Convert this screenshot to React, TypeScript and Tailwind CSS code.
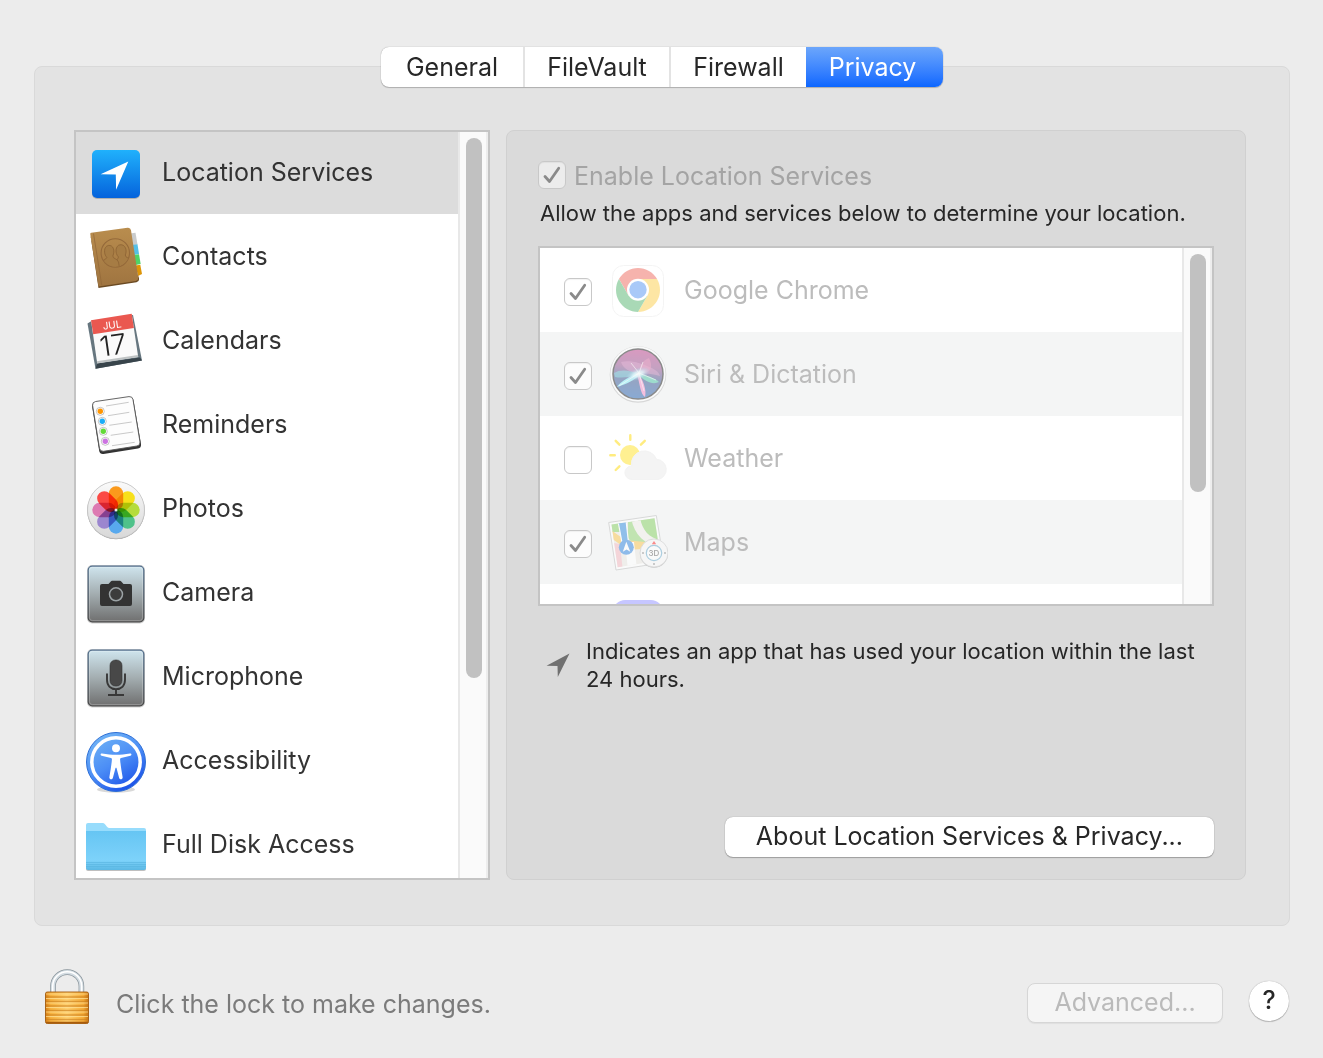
import type { ReactNode } from "react";

const PETALS = ["#fb9a1c", "#f7e01a", "#b5dc3c", "#4fc28a", "#58a9ee", "#9b86cf", "#dd7ab2", "#fb4a45"];

function SideIcon({ children }: { children: ReactNode }) {
  return (
    <svg viewBox="0 -2 64 64" className="size-16 shrink-0 overflow-visible" aria-hidden="true">
      {children}
    </svg>
  );
}

function LocationIcon() {
  return (
    <SideIcon>
      <defs>
        <linearGradient id="loc" x1="0" y1="0" x2="0" y2="1">
          <stop offset="0" stopColor="#20b1fc" />
          <stop offset="1" stopColor="#0563dc" />
        </linearGradient>
      </defs>
      <rect x="8" y="9" width="48" height="48" rx="5" fill="#000" opacity=".2" />
      <rect x="8" y="8" width="48" height="48" rx="5" fill="url(#loc)" />
      <path d="M44.3 19.4 16.6 32.3l15.2.2.3 15.2z" fill="#fff" />
    </SideIcon>
  );
}

function ContactsIcon() {
  return (
    <SideIcon>
      <defs>
        <linearGradient id="book" x1="0" y1="0" x2="0" y2="1">
          <stop offset="0" stopColor="#b98d4e" />
          <stop offset="1" stopColor="#9f7440" />
        </linearGradient>
        <clipPath id="seal">
          <circle cx="31.300" cy="27" r="13.600" />
        </clipPath>
      </defs>
      <path d="m46 7.500 5.500-.8 2 11.800-5 1z" fill="#c9cbcc" />
      <path d="m48 19 5.500-.8 1.500 9.800-5 1z" fill="#55bfe6" />
      <path d="m49.500 29 5.500-.8 1.700 9.800-5 1z" fill="#4fd367" />
      <path d="m51.500 39.500 4.800-.7 1.700 9.200-4 2z" fill="#dd9508" />
      <path d="M6.500 9.500 14.500 62l38-5.800q3-.5 2.500-4l-1-3-36 5z" fill="#6b4a22" />
      <path d="M6.300 8.200q-.2-1.200 1-1.400L43.500 1.700q3-.4 3.500 2.600l7.300 47q.4 3-2.600 3.600L14.500 60.500z" fill="url(#book)" />
      <path d="m9.500 7.500 8.300 52" stroke="#94693a" strokeWidth=".8" />
      <circle cx="31.300" cy="27" r="14.200" fill="none" stroke="#94693a" strokeWidth="1.100" />
      <g clipPath="url(#seal)" fill="#a67c44" stroke="#8f6536" strokeWidth=".9">
        <path d="M33 36c-1-2 1-3 1.500-5-4-4-3-11.500 1.500-12.200 5-.8 7.500 5 5.300 10.200 0 2.500 3 3 5 4v8H33z" />
        <path d="M16 38c1-3.500 6-4 6.800-6.500-3.500-4-3-11 1.500-12 5-1 7 5.500 4.500 10.500 0 3 4.700 2.500 5.700 6l1 6H16z" />
      </g>
    </SideIcon>
  );
}

function CalendarIcon() {
  return (
    <SideIcon>
      <path d="m3.500 13.500 4-2.500L49 5l9 45.500-46.500 8.300z" fill="#66767f" />
      <path d="m11.500 58.800 46.500-8.300-2-3-43 6z" fill="#38444b" />
      <path d="m7 10.200 40.700-6.500L54.200 47l-41 6.300z" fill="#fafafa" />
      <path d="m12.800 51.300 41-6.300.4 2-41 6.500z" fill="#bfc3c4" />
      <path d="m7 10.200 40.700-6.500 2.200 14.300L9.200 24.300z" fill="#ea5850" />
      <text x="0" y="0" transform="translate(28.500 18.500) rotate(-8)" textAnchor="middle" fontSize="10" fill="#fff" fontFamily="Inter, sans-serif">JUL</text>
      <text x="0" y="0" transform="translate(30.500 45) rotate(-8)" textAnchor="middle" fontSize="28" fontWeight="300" fill="#222" fontFamily="Inter, sans-serif">17</text>
    </SideIcon>
  );
}

function RemindersIcon() {
  return (
    <SideIcon>
      <path d="M8.200 13q-.5-4 3-4.500L45.500 3.500q3.500-.4 4 3L57 50q.4 4-3 4.500l-34.500 5.400q-3.500.5-4.300-3z" fill="#333" />
      <path d="M8.600 11.500q-.4-3.500 3-4L45 2.600q3.400-.4 4 3L56 48q.4 3.500-3 4L19.500 57.300q-3.300.4-4-3z" fill="#fdfdfd" stroke="#555" strokeWidth=".9" />
      <path d="m22 12 22.700-3.700M24 21.700l21.300-3.400m-20 13L47.700 28m-21 13.300L49.300 38M28 51.700l22.700-3.400" stroke="#bbb" strokeWidth=".8" />
      {[
        ["#ff9500", 16.3, 17.3],
        ["#1badf8", 18.3, 27.3],
        ["#63da38", 19.3, 37.3],
        ["#cc73e1", 21.3, 47.3],
      ].map(([c, x, y]) => (
        <g key={c}>
          <circle cx={x} cy={y} r="4" fill="#fff" stroke="#aaa" strokeWidth=".7" />
          <circle cx={x} cy={y} r="2.700" fill={String(c)} />
        </g>
      ))}
    </SideIcon>
  );
}

function PhotosIcon() {
  return (
    <SideIcon>
      <defs>
        <linearGradient id="photo" x1="0" y1="0" x2="0" y2="1">
          <stop offset="0" stopColor="#fafafa" />
          <stop offset="1" stopColor="#d8d8d8" />
        </linearGradient>
      </defs>
      <circle cx="32" cy="32.400" r="28.800" fill="#999" />
      <circle cx="32" cy="32" r="28.500" fill="url(#photo)" stroke="#c4c4c4" strokeWidth=".7" />
      <g style={{ isolation: "isolate" }}>
        {PETALS.map((c, i) => (
          <rect key={c} x="24.800" y="8.300" width="14.400" height="23.700" rx="7.200" fill={c} transform={`rotate(${i * 45} 32 32)`} className="mix-blend-multiply" />
        ))}
      </g>
      <circle cx="32" cy="32" r="1.500" fill="#fff" opacity=".9" />
    </SideIcon>
  );
}

function MetalTile({ id }: { id: string }) {
  return (
    <>
      <defs>
        <linearGradient id={id} x1="0" y1="0" x2="0" y2="1">
          <stop offset="0" stopColor="#cfe5ee" />
          <stop offset=".5" stopColor="#a3adb0" />
          <stop offset="1" stopColor="#6f6f6f" />
        </linearGradient>
        <linearGradient id={id + "-edge"} x1="0" y1="0" x2="0" y2="1">
          <stop offset="0" stopColor="#56728f" />
          <stop offset="1" stopColor="#4a4a4a" />
        </linearGradient>
      </defs>
      <rect x="3" y="3" width="58" height="58.500" rx="5" fill="#000" opacity=".18" />
      <rect x="4.200" y="4.200" width="55.600" height="55.600" rx="4" fill={`url(#${id})`} stroke={`url(#${id}-edge)`} strokeWidth="1.300" />
      <rect x="5.400" y="5.400" width="53.200" height="53.200" rx="3" fill="none" stroke="#fff" strokeWidth=".7" opacity=".35" />
    </>
  );
}

function CameraIcon() {
  return (
    <SideIcon>
      <MetalTile id="cam" />
      <path d="M18 22h6.500l2.500-2.700q.4-.5 1-.5h8q.600 0 1 .5l2.500 2.700H46q2 0 2 2v18q0 2-2 2H18q-2 0-2-2V24q0-2 2-2z" fill="#333" />
      <circle cx="32" cy="32.300" r="6.500" fill="#3c3c3c" stroke="#9ba2a5" strokeWidth="1.500" />
    </SideIcon>
  );
}

function MicrophoneIcon() {
  return (
    <SideIcon>
      <MetalTile id="mic" />
      <rect x="26" y="14" width="12" height="26" rx="5.500" fill="#484848" stroke="#333" strokeWidth=".6" />
      <path d="M23 27.500v6.300c0 6 3.800 9.300 9 9.300s9-3.300 9-9.300v-6.300M32 43v5.500M24 49h16" fill="none" stroke="#383838" strokeWidth="1.900" />
    </SideIcon>
  );
}

function AccessibilityIcon() {
  return (
    <SideIcon>
      <defs>
        <linearGradient id="acc" x1=".2" y1="0" x2=".8" y2="1">
          <stop offset="0" stopColor="#72b6f5" />
          <stop offset=".5" stopColor="#4b8df6" />
          <stop offset="1" stopColor="#1549e6" />
        </linearGradient>
      </defs>
      <ellipse cx="32" cy="59.500" rx="19" ry="3.200" fill="#000" opacity=".15" />
      <circle cx="32" cy="32" r="29.500" fill="url(#acc)" stroke="#2e6fd6" strokeWidth="1" />
      <circle cx="32" cy="32" r="24.200" fill="none" stroke="#fff" strokeWidth="3.500" />
      <circle cx="32" cy="18.300" r="4" fill="#fff" />
      <path d="M18 23.400c5 .8 9.500 1.400 14 1.400s9-.6 14-1.400c1.700-.2 2 2 .4 2.400l-9.400 2.100c-.8.2-1 .7-.9 1.500.3 4.600 1.500 12 2.500 17.500.5 2.600-2.800 3.200-3.500.8L32.500 38c-.2-.5-.8-.5-1 0l-2.600 9.700c-.7 2.400-4 1.800-3.500-.8 1-5.500 2.200-12.900 2.500-17.500.1-.8-.1-1.300-.9-1.500l-9.400-2.100c-1.600-.4-1.300-2.600.4-2.400z" fill="#fff" />
    </SideIcon>
  );
}

function FolderIcon() {
  return (
    <SideIcon>
      <defs>
        <linearGradient id="fold" x1="0" y1="0" x2="0" y2="1">
          <stop offset="0" stopColor="#66c5f3" />
          <stop offset=".75" stopColor="#7dd2fa" />
          <stop offset="1" stopColor="#5bb8e4" />
        </linearGradient>
      </defs>
      <path d="M2 20v35q0 2 2 2h56q2 0 2-2V20z" fill="#000" opacity=".25" />
      <path d="M2 11q0-2 2-2h14.500q1.500 0 2.500 1.200l2 2.600q1 1.200 2.500 1.200H60q2 0 2 2v20H2z" fill="#97dcfc" />
      <path d="M2 17h60v37q0 2-2 2H4q-2 0-2-2z" fill="url(#fold)" />
      <path d="M2 48.500h60M2 50.500h60M2 52.500h60" stroke="#58b4df" strokeWidth=".6" />
    </SideIcon>
  );
}

function AppIcon({ faded = "opacity-40", children }: { faded?: string; children: ReactNode }) {
  return (
    <svg viewBox="0 0 60 60" className={`ml-4 size-[60px] shrink-0 ${faded}`} aria-hidden="true">
      {children}
    </svg>
  );
}

function ChromeIcon() {
  return (
    <AppIcon>
      <rect x="4.500" y="5.500" width="51" height="51" rx="11" fill="#fff" stroke="#e4e4e4" strokeWidth="1" />
      <path d="M30 19h19.050A22 22 0 0 0 10.950 19L20.500 35.500z" fill="#ea4335" />
      <path d="M49.050 19A22 22 0 0 1 30 52l9.500-16.500L30 19z" fill="#fcc31e" />
      <path d="M30 52A22 22 0 0 1 10.950 19l9.550 16.500h19z" fill="#2ba24c" />
      <circle cx="30" cy="29.700" r="11" fill="#fff" />
      <circle cx="30" cy="29.700" r="8.700" fill="#2a7af0" />
    </AppIcon>
  );
}

function SiriIcon() {
  return (
    <AppIcon faded="opacity-50">
      <defs>
        <linearGradient id="siri" x1=".5" y1="0" x2=".4" y2="1">
          <stop offset="0" stopColor="#c0408c" />
          <stop offset=".35" stopColor="#96508f" />
          <stop offset=".6" stopColor="#3a5590" />
          <stop offset="1" stopColor="#1f62b4" />
        </linearGradient>
        <radialGradient id="glow">
          <stop offset="0" stopColor="#fff" />
          <stop offset=".4" stopColor="#c8f6ff" stopOpacity=".8" />
          <stop offset="1" stopColor="#6ad" stopOpacity="0" />
        </radialGradient>
      </defs>
      <circle cx="30" cy="30.500" r="28.300" fill="#bbb" />
      <circle cx="30" cy="30" r="27.600" fill="#fff" />
      <circle cx="30" cy="30" r="25" fill="url(#siri)" stroke="#222" strokeWidth="1.500" />
      <path d="M30 30C21 28 15 24 13 18c9-2 19 1 26 4 8 3 12 6 13 10-7-2-14-3-22-2z" fill="#e08ac4" opacity=".45" />
      <path d="M32 29c-1-7 3-13 9-15 4 8 3 16-9 15z" fill="#f072a8" opacity=".5" />
      <path d="M6 29c6-4 16-3 24 1-8 4-18 4-23 3z" fill="#51d2dc" opacity=".6" />
      <path d="M31 29C22 32 13 37 9 43c10-3 17-7 23-12z" fill="#83f0fa" />
      <path d="M30 29c8 2 17 5 21 9-6 3-14 0-21-8z" fill="#4ee0ac" opacity=".8" />
      <path d="M30 29c5 7 9 17 7 24-5-3-5-14-8-22z" fill="#f58ac8" />
      <ellipse cx="30" cy="30" rx="13" ry="6" fill="url(#glow)" transform="rotate(-20 30 30)" />
      <path d="m11 42 20-13 17 7M31 29l5 18M23 19l8 10 4-11" fill="none" stroke="#fff" strokeWidth="1" opacity=".6" />
    </AppIcon>
  );
}

function WeatherIcon() {
  return (
    <AppIcon faded="opacity-100">
      <circle cx="22" cy="27" r="10" fill="#fff091" />
      <path d="M22.300 7.300v4.500M36.800 12.800l-3.900 3.900M2.300 27.300h4.500M7.700 12.800l3.700 3.900M7.700 42l3.700-3.700" stroke="#ffec80" strokeWidth="2.400" strokeLinecap="round" />
      <path d="M24 51.500a6.800 6.800 0 0 1-.5-13.600A13 13 0 0 1 48.500 31.300a10.200 10.200 0 0 1 1.500 20.200z" fill="#f4f4f4" stroke="#f3f3f3" />
    </AppIcon>
  );
}

function MapsIcon() {
  return (
    <AppIcon faded="opacity-50">
      <defs>
        <clipPath id="sheet">
          <path d="m3.500 12.500 43-6.300 6.500 42-43.300 7z" />
        </clipPath>
      </defs>
      <path d="m.7 10.500 47.600-7 7.700 47-48 7.500z" fill="#fff" stroke="#bbb" strokeWidth="1" />
      <g clipPath="url(#sheet)">
        <path d="M0 0h60v60H0z" fill="#ece9e2" />
        <path d="M0 5h12l4 15H0zM30 6h25v30c-14 0-24-12-25-30z" fill="#83d060" />
        <path d="M0 30 12 32l3 28H0z" fill="#f4b6bf" />
        <path d="m20 10 8-2c0 12 10 24 26 27v8C40 40 28 36 20 26z" fill="#90d470" />
        <path d="m3 18 14 10 20 2 20 14v6L34 37 20 38 3 26z" fill="#fbc44c" />
        <path d="M23 5h9c2 14 10 22 24 24v7C38 34 26 24 23 5z" fill="#f1eee8" />
        <path d="M17 30h9l3 28h-9z" fill="#fff" />
        <path d="m10 9 8-1 3 27-6 1z" fill="#2f8be0" stroke="#fff" strokeWidth="1.200" />
      </g>
      <circle cx="18.300" cy="35.300" r="7.500" fill="#2b83e0" />
      <path d="m18.300 29.800 4 10-3.700-2.300-3.800 2.300z" fill="#fff" />
      <circle cx="46" cy="41.800" r="14" fill="#999" />
      <circle cx="46" cy="41" r="14" fill="#f8f8f8" stroke="#bbb" strokeWidth=".8" />
      <circle cx="46" cy="41" r="7.700" fill="#fff" stroke="#67a9cc" strokeWidth="1.200" />
      <path d="m46 29 2.200 3.300h-4.400z" fill="#f22" />
      <g fill="#777">
        <circle cx="35" cy="41" r=".9" />
        <circle cx="57" cy="41" r=".9" />
        <circle cx="46" cy="52" r=".9" />
      </g>
      <text x="46" y="43.800" textAnchor="middle" fontSize="8" fontWeight="500" fill="#555" fontFamily="Inter, sans-serif">3D</text>
    </AppIcon>
  );
}

function HiddenAppIcon() {
  return (
    <AppIcon>
      <rect x="5" y="4" width="50" height="51" rx="12" fill="#7272ff" />
    </AppIcon>
  );
}

function LockIcon() {
  return (
    <svg viewBox="0 0 46 56" className="ml-[10px] h-14 w-[46px] shrink-0" aria-hidden="true">
      <defs>
        <linearGradient id="brass" x1="0" y1="0" x2="1" y2="0">
          <stop offset="0" stopColor="#d98016" />
          <stop offset=".12" stopColor="#f7b23f" />
          <stop offset=".5" stopColor="#ffd070" />
          <stop offset=".88" stopColor="#f5ac38" />
          <stop offset="1" stopColor="#c97412" />
        </linearGradient>
      </defs>
      <path d="M9 25V18.300a14.200 14.200 0 0 1 28.400 0V25" fill="none" stroke="#89949b" strokeWidth="5.600" />
      <path d="M9 25V18.300a14.200 14.200 0 0 1 28.400 0V25" fill="none" stroke="#d3dce2" strokeWidth="4.200" />
      <path d="M8.700 25V18.300a14.500 14.500 0 0 1 29 0V25" fill="none" stroke="#fff" strokeWidth="1.600" />
      <rect x="1.500" y="24" width="43" height="31.500" rx="1.800" fill="url(#brass)" stroke="#a35a0c" strokeWidth=".9" />
      <path d="M2 29h42M2 33.500h42M2 38h42M2 42.500h42M2 47h42M2 51.500h42" stroke="#c97c1c" strokeWidth="1.300" opacity=".6" />
      <path d="M2 26h42M2 30.500h42M2 35h42M2 39.500h42M2 44h42M2 48.500h42" stroke="#ffe39a" strokeWidth="1" opacity=".7" />
      <path d="M2 54.500h42" stroke="#a85c0c" strokeWidth="1.300" />
    </svg>
  );
}

const CATEGORIES = [
  { label: "Location Services", Icon: LocationIcon },
  { label: "Contacts", Icon: ContactsIcon },
  { label: "Calendars", Icon: CalendarIcon },
  { label: "Reminders", Icon: RemindersIcon },
  { label: "Photos", Icon: PhotosIcon },
  { label: "Camera", Icon: CameraIcon },
  { label: "Microphone", Icon: MicrophoneIcon },
  { label: "Accessibility", Icon: AccessibilityIcon },
  { label: "Full Disk Access", Icon: FolderIcon },
];

const APPS = [
  { label: "Google Chrome", checked: true, Icon: ChromeIcon },
  { label: "Siri & Dictation", checked: true, Icon: SiriIcon },
  { label: "Weather", checked: false, Icon: WeatherIcon },
  { label: "Maps", checked: true, Icon: MapsIcon },
];

const TABS = [
  { label: "General", width: "w-36" },
  { label: "FileVault", width: "w-[146px]" },
  { label: "Firewall", width: "w-[135px]" },
  { label: "Privacy", width: "w-[137px]" },
];

function Checkbox({ id, checked, tone = "bg-white/70" }: { id: string; checked: boolean; tone?: string }) {
  return (
    <span className="grid size-7 shrink-0">
      <input
        id={id}
        type="checkbox"
        defaultChecked={checked}
        disabled
        className={`col-start-1 row-start-1 size-7 appearance-none rounded-md border border-[#c8c8c8] shadow-[inset_0_1px_1px_rgba(0,0,0,0.05)] ${tone}`}
      />
      {checked && (
        <svg viewBox="0 0 28 28" className="pointer-events-none col-start-1 row-start-1 size-7" aria-hidden="true">
          <path d="m7 15.500 4.500 5L20.700 7.200" fill="none" stroke="#8a8a8a" strokeWidth="2.800" strokeLinecap="round" strokeLinejoin="round" />
        </svg>
      )}
    </span>
  );
}

function ScrollTrack({ thumb }: { thumb: string }) {
  return (
    <div className="w-[30px] shrink-0 border-x-2 border-l-[#e8e8e8] border-r-[#ededed] bg-[#fafafa] px-1.5 pt-1.5" aria-hidden="true">
      <div className={`w-4 rounded-full bg-[#c1c1c1] ${thumb}`} />
    </div>
  );
}

export default function App() {
  return (
    <div className="flex h-screen min-h-[1000px] flex-col bg-[#ececec] pr-[33px] pl-[34px] pt-[47px] font-['Inter',sans-serif] text-[25px] text-[#272727]">
      <div role="tablist" className="relative z-10 flex h-10 shrink-0 self-center rounded-lg bg-white shadow-[0_0_1px_rgba(0,0,0,0.4),0_1px_1px_rgba(0,0,0,0.2)]">
        {TABS.map(({ label, width }, i) => (
          <button
            key={label}
            role="tab"
            aria-selected={i === 3}
            className={`${width} leading-10 ${
              i === 3
                ? "rounded-r-lg bg-linear-to-b from-[#6ca6fb] to-[#0a66ff] pr-1 text-white"
                : i < 2
                  ? "border-r-2 border-[#e3e3e3]"
                  : ""
            }`}
          >
            {label}
          </button>
        ))}
      </div>

      <main className="-mt-[21px] flex min-h-0 flex-1 gap-4 rounded-lg border border-[#d9d9d9] bg-[#e3e3e3] pt-[63px] pr-[43px] pb-[45px] pl-[39px]">
        <nav aria-label="Privacy categories" className="flex w-[416px] shrink-0 border-2 border-[#c4c4c4] bg-white">
          <ul className="flex-1 overflow-y-auto [scrollbar-width:none]">
            {CATEGORIES.map(({ label, Icon }, i) => (
              <li key={label} className="first:-mt-0.5">
                <button className={`flex h-[84px] w-full items-center gap-[14px] pl-2 text-left text-[#333] ${i === 0 ? "bg-[#dcdcdc]" : ""}`}>
                  <Icon />
                  <span className="pt-0.5">{label}</span>
                </button>
              </li>
            ))}
          </ul>
          <ScrollTrack thumb="h-[73%]" />
        </nav>

        <section className="flex min-w-0 flex-1 flex-col rounded-lg border border-[#d0d0d0] bg-[#dadada] px-[31px] pt-[29px] pb-[22px]">
          <div className="flex items-center gap-2 text-[#a4a4a4]">
            <Checkbox id="enable" checked tone="bg-[#ececec]" />
            <label htmlFor="enable" className="pt-0.5 leading-7">Enable Location Services</label>
          </div>
          <p className="mt-[9px] pl-0.5 text-[22px] leading-7">
            Allow the apps and services below to determine your location.
          </p>

          <div className="mt-[19px] flex h-[360px] min-h-0 border-2 border-[#c4c4c4] bg-white">
            <ul className="min-w-0 flex-1 overflow-y-auto [scrollbar-width:none]">
              {APPS.map(({ label, checked, Icon }, i) => (
                <li key={label} className={`flex h-[84px] items-center pl-6 text-[#bcbcbc] ${i % 2 ? "bg-[#f4f5f5]" : ""}`}>
                  <span className="mt-1">
                    <Checkbox id={`app-${i}`} checked={checked} />
                  </span>
                  <Icon />
                  <label htmlFor={`app-${i}`} className="ml-4 pt-0.5">{label}</label>
                </li>
              ))}
              <li className="flex h-[84px] items-center pl-[52px]">
                <HiddenAppIcon />
              </li>
            </ul>
            <ScrollTrack thumb="h-[68%]" />
          </div>

          <div className="mt-[31px] flex gap-4 pl-2">
            <svg viewBox="0 0 24 24" className="mt-4 size-6 shrink-0" aria-hidden="true">
              <path d="M23.500.5.500 12.700l11 .3.300 11z" fill="#707070" />
            </svg>
            <p className="text-[22px] leading-7">Indicates an app that has used your location within the last 24 hours.</p>
          </div>

          <button className="mt-auto h-10 self-end rounded-lg bg-white px-[31px] shadow-[0_0_1px_rgba(0,0,0,0.4),0_1px_1px_rgba(0,0,0,0.25)]">
            About Location Services &amp; Privacy...
          </button>
        </section>
      </main>

      <footer className="flex shrink-0 items-end pt-[42px] pb-[34px]">
        <LockIcon />
        <p className="ml-[26px] flex-1 leading-10 text-[#7b7b7b]">Click the lock to make changes.</p>
        <button disabled className="mb-px h-10 w-[196px] rounded-lg border border-[#d6d6d6] bg-[#f5f5f5] text-[#bababa] shadow-[0_1px_1px_rgba(0,0,0,0.06)]">
          Advanced...
        </button>
        <button aria-label="Help" className="mr-px mb-[3px] ml-[26px] size-10 rounded-full bg-white font-medium shadow-[0_0_1px_rgba(0,0,0,0.4),0_1px_1px_rgba(0,0,0,0.2)]">
          ?
        </button>
      </footer>
    </div>
  );
}
